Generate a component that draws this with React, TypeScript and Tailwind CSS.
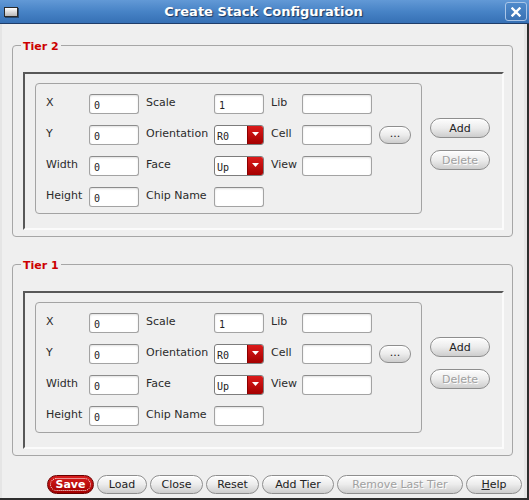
import React from 'react';

const fieldCls =
    "h-[20px] bg-white border border-[#a3a3a3] border-t-[#8c8c8c] rounded-[3px] shadow-[inset_0_1px_2px_rgba(0,0,0,0.12)] pl-[4px] pt-[3px] font-['DejaVu_Sans_Mono',monospace] text-[10px] text-[#222] outline-none";

const btnCls =
    "flex items-center justify-center shrink-0 rounded-[10px] border border-[#8e8e8e] bg-gradient-to-b from-[#fdfdfd] via-[#ececec] to-[#cdcdcd] shadow-[inset_0_1px_0_#ffffff] text-[11px] leading-none";

function Field({ value = '', className = 'w-[50px]' }: { value?: string; className?: string }) {
    return <input readOnly defaultValue={value} className={`${fieldCls} ${className}`} />;
}

function Label({ children, className }: { children: React.ReactNode; className: string }) {
    return <span className={`shrink-0 text-[11px] leading-[18px] text-[#2b2b2b] whitespace-nowrap ${className}`}>{children}</span>;
}

function Select({ value }: { value: string }) {
    return (
        <div className="flex w-[50px] h-[20px] shrink-0 rounded-[3px] border border-[#7c7c7c] overflow-hidden bg-white">
            <span className="flex-1 pl-[2px] pt-[3px] font-['DejaVu_Sans_Mono',monospace] text-[10px] leading-[15px] text-[#222]">{value}</span>
            <span className="w-[16px] flex justify-center pt-[6px] bg-gradient-to-b from-[#dc1a1a] to-[#a50000] border-l border-[#8a0000]">
                <svg width="7" height="4" viewBox="0 0 7 4">
                    <polygon points="0,0 7,0 3.5,4" fill="#ffffff" />
                </svg>
            </span>
        </div>
    );
}

function Btn({ children, className, disabled }: { children: React.ReactNode; className: string; disabled?: boolean }) {
    return (
        <button
            className={`${btnCls} ${className} ${disabled ? 'text-[#a0a0a0] [text-shadow:1px_1px_0_#ffffff]' : 'text-[#222]'}`}
        >
            {children}
        </button>
    );
}

function TierPanel({ title, className }: { title: string; className: string }) {
    return (
        <section className={`ml-[10px] w-[501px] h-[192px] shrink-0 border border-[#a6a6a6] rounded-[4px] flex flex-col ${className}`}>
            {/* legend */}
            <div className="flex items-start h-[8px]">
                <span className="-mt-[6px] ml-[8px] px-[2px] bg-[#efefef] text-[11px] font-bold leading-[14px] text-[#cc0000]">
                    {title}
                </span>
            </div>

            {/* sunken frame */}
            <div className="ml-[10px] mt-[18px] w-[481px] h-[158px] flex items-start border-2 border-t-[#585858] border-l-[#585858] border-r-[#fbfbfb] border-b-[#fbfbfb]">
                <div className="ml-[10px] mt-[9px] w-[387px] h-[131px] shrink-0 border border-[#a3a3a3] rounded-[4px] pt-[10px] pl-[10px] flex flex-col gap-[11px]">
                    <div className="flex items-start h-[20px]">
                        <Label className="w-[43px]">X</Label>
                        <Field value="0" />
                        <Label className="ml-[7px] w-[68px]">Scale</Label>
                        <Field value="1" />
                        <Label className="ml-[7px] w-[31px]">Lib</Label>
                        <Field className="w-[70px]" />
                    </div>
                    <div className="flex items-start h-[20px]">
                        <Label className="w-[43px]">Y</Label>
                        <Field value="0" />
                        <Label className="ml-[7px] w-[68px]">Orientation</Label>
                        <Select value="R0" />
                        <Label className="ml-[7px] w-[31px]">Cell</Label>
                        <Field className="w-[70px]" />
                        <Btn className="ml-[7px] mt-[1px] w-[32px] h-[18px] rounded-[9px] items-end pb-[4px] text-[9px]">...</Btn>
                    </div>
                    <div className="flex items-start h-[20px]">
                        <Label className="w-[43px]">Width</Label>
                        <Field value="0" />
                        <Label className="ml-[7px] w-[68px]">Face</Label>
                        <Select value="Up" />
                        <Label className="ml-[7px] w-[31px]">View</Label>
                        <Field className="w-[70px]" />
                    </div>
                    <div className="flex items-start h-[20px]">
                        <Label className="w-[43px]">Height</Label>
                        <Field value="0" />
                        <Label className="ml-[7px] w-[68px]">Chip Name</Label>
                        <Field />
                    </div>
                </div>

                <div className="ml-[8px] mt-[44px] flex flex-col gap-[12px]">
                    <Btn className="w-[60px] h-[20px]">Add</Btn>
                    <Btn className="w-[60px] h-[20px]" disabled>
                        Delete
                    </Btn>
                </div>
            </div>
        </section>
    );
}

export default function App() {
    return (
        <div className="w-[529px] h-[500px] flex flex-col bg-[#efefef] overflow-hidden font-['DejaVu_Sans',sans-serif]">
            {/* Title bar */}
            <header className="h-[24px] shrink-0 flex items-center bg-gradient-to-b from-[#6299d6] via-[#4783c6] to-[#3670b5] border-b border-[#1f3d69]">
                <div className="ml-[4px] w-[14px] h-[10px] shrink-0 border border-[#2a2a2a] bg-gradient-to-b from-white to-[#b8b8b8] shadow-[1px_1px_0_#23476f]" />
                <h1 className="flex-1 ml-[4px] text-center text-white font-bold text-[13px] leading-none [text-shadow:1px_1px_1px_#1c375e]">
                    Create Stack Configuration
                </h1>
                <button className="mr-[2px] w-[22px] h-[19px] shrink-0 flex items-center justify-center rounded-[3px] border border-[#aac6e8] bg-gradient-to-b from-[#4f8acb] to-[#3a72b4]">
                    <svg width="10" height="10" viewBox="0 0 10 10">
                        <path d="M1.5 1.5 L8.5 8.5 M8.5 1.5 L1.5 8.5" stroke="#ffffff" strokeWidth="2.4" strokeLinecap="square" />
                    </svg>
                </button>
            </header>

            {/* Body */}
            <div className="flex-1 flex flex-col border-r-2 border-b-2 border-[#2e2e2e]">
                <div className="flex-1 flex flex-col border-l-2 border-r-[3px] border-[#e5e5e5]">
                    <TierPanel title="Tier 2" className="mt-[21px]" />
                    <TierPanel title="Tier 1" className="mt-[27px]" />

                    <div className="flex gap-[3px] ml-[45px] mt-[19px]">
                        <button className="w-[47px] h-[19px] shrink-0 flex rounded-[10px] border border-[#6a0000] bg-gradient-to-b from-[#d81c1c] to-[#a30000] p-[2px]">
                            <span className="flex-1 flex items-center justify-center rounded-[7px] border border-dotted border-white text-white font-bold text-[11px] leading-none">
                                Save
                            </span>
                        </button>
                        <Btn className="w-[50px] h-[19px]">Load</Btn>
                        <Btn className="w-[53px] h-[19px]">Close</Btn>
                        <Btn className="w-[53px] h-[19px]">Reset</Btn>
                        <Btn className="w-[72px] h-[19px]">Add Tier</Btn>
                        <Btn className="w-[126px] h-[19px]" disabled>
                            Remove Last Tier
                        </Btn>
                        <Btn className="w-[56px] h-[19px]">
                            <span>
                                <span className="underline">H</span>elp
                            </span>
                        </Btn>
                    </div>
                </div>
            </div>
        </div>
    );
}
